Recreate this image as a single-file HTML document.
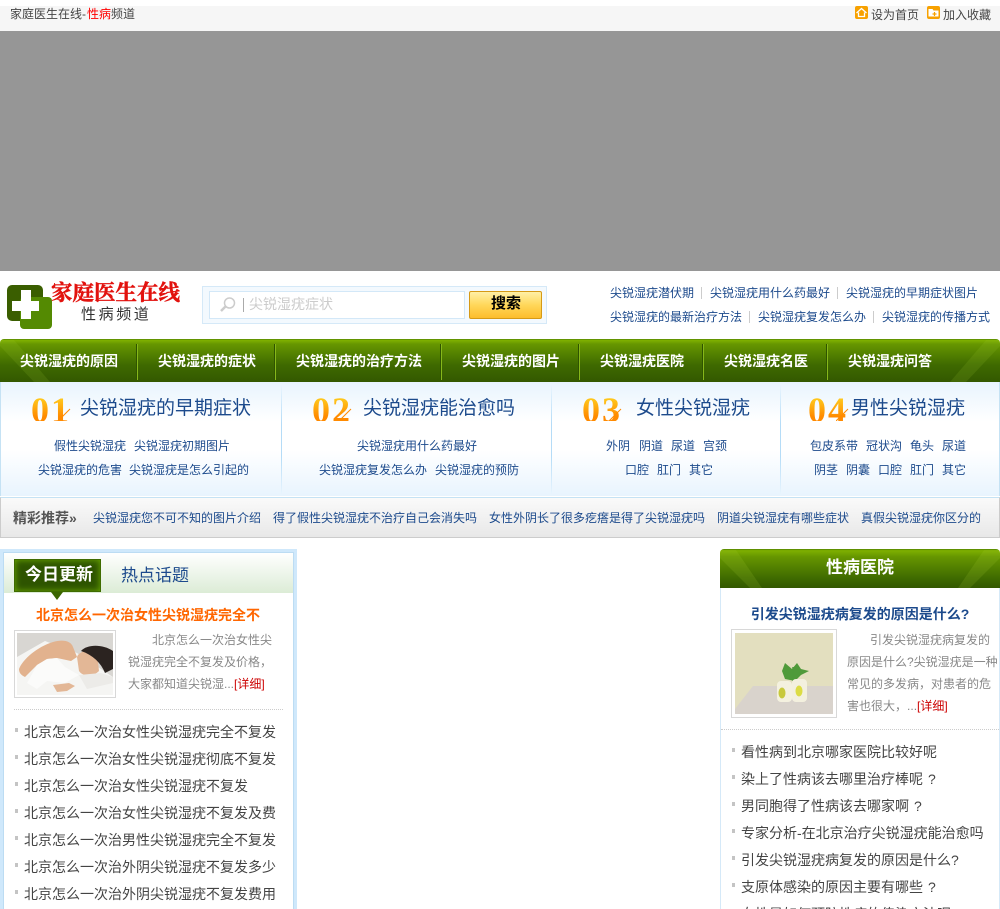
<!DOCTYPE html>
<html lang="zh-CN"><head><meta charset="utf-8"><title>家庭医生在线-性病频道</title>
<style>
html,body{margin:0;padding:0;background:#fff;width:1000px;height:909px;overflow:hidden}
body{position:relative;font:12px/20px "Liberation Sans","WenQuanYi Zen Hei","Noto Sans CJK SC",sans-serif;color:#444}
div,span,a,svg{position:absolute;display:block}
b,i{position:static;display:inline;font-style:normal}
#w{left:0;top:0;width:1000px;height:909px;overflow:hidden}
.t{white-space:nowrap;height:20px;line-height:20px}
.c{transform:translateX(-50%)}
.l{color:#1c4a8c}
.g{color:#888}
.n{color:#fff;font-weight:bold;font-size:14px}
.h{color:#1c4a8c;font-size:19px;line-height:24px;height:24px}
.m{font-size:14px;color:#444}
.sep{width:1px;background:linear-gradient(#e9f5fe,#b5dcf7 35%,#b5dcf7 65%,#e9f5fe)}
.ns{width:2px;top:344px;height:36px;background:linear-gradient(90deg,#2f5400 50%,#86b71a 50%)}
.bu{width:3px;height:4px;background:#c4c4c4}
.num{font:bold 36px/36px "Liberation Serif",serif;height:29px;overflow:hidden;background:linear-gradient(#ffd020 15%,#ff8a00 85%);-webkit-background-clip:text;background-clip:text;color:transparent;white-space:nowrap;letter-spacing:2px}
.ts{width:1px;height:12px;background:#ccc}
.p{font-family:"Noto Sans CJK TC",sans-serif;font-weight:normal}
.q{font-weight:normal;margin-left:5px}
</style></head><body><div id="w">
<div style="left:0;top:6px;width:1000px;height:25px;background:#f6f6f6"></div>
<div class="t" style="left:10px;top:4px">家庭医生在线-<b style="font-weight:normal;color:#f00;margin-left:1px">性病</b>频道</div>
<svg style="left:855px;top:6px" width="13" height="13" viewBox="0 0 13 13"><rect width="13" height="13" rx="2" fill="#f7a100"/><path d="M1.500 7 6.500 2.500 11.500 7M3.500 6.500V10.500H9.500V6.500" fill="none" stroke="#fff" stroke-width="1.300"/></svg>
<div class="t" style="left:871px;top:5px">设为首页</div>
<svg style="left:927px;top:6px" width="13" height="13" viewBox="0 0 13 13"><rect width="13" height="13" rx="2" fill="#f7a100"/><path d="M1.500 3H5.500L6.500 4.500H11.500V10.500H1.500Z" fill="#fff"/><path d="M7.500 6V10M5.500 8H9.500" stroke="#f7a100" stroke-width="1.200"/></svg>
<div class="t" style="left:943px;top:5px">加入收藏</div>
<div style="left:0;top:31px;width:1000px;height:240px;background:#969696"></div>

<svg style="left:7px;top:284px" width="46" height="46" viewBox="0 0 46 46"><rect x="0" y="1" width="36" height="36" rx="5" fill="#3a5e00"/><rect x="13" y="13" width="32" height="32" rx="4" fill="#548a02"/><path d="M14 6h10v11h8v10h-8v8H14v-8H5V17h9z" fill="#fff"/></svg>
<div class="t" style="left:51px;top:280px;height:26px;line-height:26px;font-family:'Liberation Serif','Noto Serif CJK SC',serif;font-weight:bold;font-size:21.500px;color:#e2120e;-webkit-text-stroke:.5px #e2120e">家庭医生在线</div>
<div class="t" style="left:81px;top:305px;font-size:15px;color:#333;letter-spacing:2.600px">性病频道</div>

<div style="left:202px;top:286px;width:343px;height:36px;border:1px solid #d5e9f8;background:#f3f9fe"></div>
<div style="left:209px;top:291px;width:254px;height:26px;border:1px solid #d3e8f8;background:#fff"></div>
<svg style="left:219px;top:296px" width="18" height="18" viewBox="0 0 18 18"><circle cx="10.500" cy="7" r="5" fill="none" stroke="#ccc" stroke-width="1.500"/><path d="M6.500 10.500 2 15" stroke="#ccc" stroke-width="2.500"/></svg>
<div style="left:243px;top:298px;width:1px;height:14px;background:#aaa"></div>
<div class="t" style="left:249px;top:294px;font-size:14px;color:#ccc">尖锐湿疣症状</div>
<div style="left:469px;top:291px;width:71px;height:26px;border:1px solid #d69a16;border-radius:2px;background:linear-gradient(#fff0a6,#ffd75a 50%,#fdbd2c)"></div>
<div class="t c" style="left:506px;top:294px;font-size:15px;font-weight:bold;color:#000">搜索</div>

<div class="t l" style="left:610px;top:283px">尖锐湿疣潜伏期</div><div class="ts" style="left:701px;top:287px"></div>
<div class="t l" style="left:710px;top:283px">尖锐湿疣用什么药最好</div><div class="ts" style="left:837px;top:287px"></div>
<div class="t l" style="left:846px;top:283px">尖锐湿疣的早期症状图片</div>
<div class="t l" style="left:610px;top:307px">尖锐湿疣的最新治疗方法</div><div class="ts" style="left:749px;top:311px"></div>
<div class="t l" style="left:758px;top:307px">尖锐湿疣复发怎么办</div><div class="ts" style="left:873px;top:311px"></div>
<div class="t l" style="left:882px;top:307px">尖锐湿疣的传播方式</div>

<div style="left:0;top:339px;width:1000px;height:43px;border-radius:4px 4px 0 0;background:linear-gradient(#4f8000 0,#7fb000 3%,#669600 12%,#3f6a00 60%,#335800 100%)"></div>
<svg style="left:0;top:340px" width="1000" height="42"><path d="M0 6 34 42H50L14 0H0ZM1000 6 966 42H950L986 0H1000Z" fill="#a6d030" opacity=".14"/></svg>
<div class="t n" style="left:20px;top:351px">尖锐湿疣的原因</div><div class="ns" style="left:136px"></div>
<div class="t n" style="left:158px;top:351px">尖锐湿疣的症状</div><div class="ns" style="left:274px"></div>
<div class="t n" style="left:296px;top:351px">尖锐湿疣的治疗方法</div><div class="ns" style="left:440px"></div>
<div class="t n" style="left:462px;top:351px">尖锐湿疣的图片</div><div class="ns" style="left:578px"></div>
<div class="t n" style="left:600px;top:351px">尖锐湿疣医院</div><div class="ns" style="left:702px"></div>
<div class="t n" style="left:724px;top:351px">尖锐湿疣名医</div><div class="ns" style="left:826px"></div>
<div class="t n" style="left:848px;top:351px">尖锐湿疣问答</div>

<div style="left:0;top:382px;width:998px;height:114px;border:solid #c5e2f4;border-width:0 1px;background:linear-gradient(#e8f4fe,#fff 35%,#fff 60%,#e8f4fe)"></div>
<div class="sep" style="left:281px;top:385px;height:110px"></div>
<div class="sep" style="left:551px;top:385px;height:110px"></div>
<div class="sep" style="left:780px;top:385px;height:110px"></div>

<div class="num" style="left:31px;top:392px">01</div>
<svg style="left:58px;top:408px" width="13" height="13"><path d="M0 13 12 1" stroke="#ff8a00" fill="none"/></svg>
<div class="t h" style="left:80px;top:397px">尖锐湿疣的早期症状</div>
<div class="t l" style="left:54px;top:436px">假性尖锐湿疣</div><div class="t l" style="left:134px;top:436px">尖锐湿疣初期图片</div>
<div class="t l" style="left:38px;top:460px">尖锐湿疣的危害</div><div class="t l" style="left:129px;top:460px">尖锐湿疣是怎么引起的</div>

<div class="num" style="left:312px;top:392px">02</div>
<svg style="left:339px;top:408px" width="13" height="13"><path d="M0 13 12 1" stroke="#ff8a00" fill="none"/></svg>
<div class="t h" style="left:363px;top:397px">尖锐湿疣能治愈吗</div>
<div class="t l" style="left:357px;top:436px">尖锐湿疣用什么药最好</div>
<div class="t l" style="left:319px;top:460px">尖锐湿疣复发怎么办</div><div class="t l" style="left:435px;top:460px">尖锐湿疣的预防</div>

<div class="num" style="left:582px;top:392px">03</div>
<svg style="left:609px;top:408px" width="13" height="13"><path d="M0 13 12 1" stroke="#ff8a00" fill="none"/></svg>
<div class="t h" style="left:636px;top:397px">女性尖锐湿疣</div>
<div class="t l" style="left:606px;top:436px">外阴</div><div class="t l" style="left:639px;top:436px">阴道</div><div class="t l" style="left:671px;top:436px">尿道</div><div class="t l" style="left:703px;top:436px">宫颈</div>
<div class="t l" style="left:625px;top:460px">口腔</div><div class="t l" style="left:657px;top:460px">肛门</div><div class="t l" style="left:689px;top:460px">其它</div>

<div class="num" style="left:808px;top:392px">04</div>
<svg style="left:836px;top:408px" width="13" height="13"><path d="M0 13 12 1" stroke="#ff8a00" fill="none"/></svg>
<div class="t h" style="left:851px;top:397px">男性尖锐湿疣</div>
<div class="t l" style="left:810px;top:436px">包皮系带</div><div class="t l" style="left:866px;top:436px">冠状沟</div><div class="t l" style="left:910px;top:436px">龟头</div><div class="t l" style="left:942px;top:436px">尿道</div>
<div class="t l" style="left:814px;top:460px">阴茎</div><div class="t l" style="left:846px;top:460px">阴囊</div><div class="t l" style="left:878px;top:460px">口腔</div><div class="t l" style="left:910px;top:460px">肛门</div><div class="t l" style="left:942px;top:460px">其它</div>

<div style="left:0;top:497px;width:998px;height:39px;border:1px solid #ccc;border-top-color:#c5e2f4;background:linear-gradient(#fafafa,#e8e8e8)"></div>
<div class="t" style="left:13px;top:508px;font-size:14px;font-weight:bold;color:#555">精彩推荐»</div>
<div class="t l" style="left:93px;top:508px">尖锐湿疣您不可不知的图片介绍</div>
<div class="t l" style="left:273px;top:508px">得了假性尖锐湿疣不治疗自己会消失吗</div>
<div class="t l" style="left:489px;top:508px">女性外阴长了很多疙瘩是得了尖锐湿疣吗</div>
<div class="t l" style="left:717px;top:508px">阴道尖锐湿疣有哪些症状</div>
<div class="t l" style="left:861px;top:508px">真假尖锐湿疣你区分的</div>

<!-- left box -->
<div style="left:0;top:549px;width:297px;height:360px;background:#cfe8fb"></div>
<div style="left:3px;top:552px;width:289px;height:357px;border:solid #bcdcf3;border-width:1px 1px 0;background:#fff"></div>
<div style="left:4px;top:553px;width:289px;height:40px;background:linear-gradient(#fff,#dcecd6)"></div>
<div style="left:14px;top:559px;width:85px;height:31px;border:1px solid #3f6c00;background:#2e5400;box-shadow:inset 0 0 7px #6aa800"></div>
<div style="left:51px;top:592px;width:0;height:0;border:6px solid transparent;border-top:8px solid #3b6600;border-bottom:0"></div>
<div class="t" style="left:25px;top:565px;font-size:17px;font-weight:bold;color:#fff">今日更新</div>
<div class="t" style="left:121px;top:566px;font-size:17px;color:#1c4a8c;width:68px;letter-spacing:0">热点话题</div>
<div class="t c" style="left:148px;top:605px;font-size:14px;font-weight:bold;color:#f60">北京怎么一次治女性尖锐湿疣完全不</div>
<div style="left:14px;top:630px;width:100px;height:66px;border:1px solid #d8d8d8;background:#fff"></div>
<svg style="left:17px;top:633px" width="96" height="62" viewBox="0 0 96 62"><rect width="96" height="62" fill="#d8d6d2"/><path d="M0 62V24L28 8 60 20 96 44V62Z" fill="#f5f5f3"/><path d="M2 36C6 26 20 14 36 9 46 6 54 8 56 14L60 24 54 28 40 25 30 26 20 32 8 44C4 42 2 40 2 36Z" fill="#e2b28e"/><path d="M20 32 30 26 40 25 48 34 62 42 48 50 30 48 20 56 10 50Z" fill="#fbfbfa"/><path d="M60 24C62 18 72 16 80 20L82 38C76 44 66 44 62 38Z" fill="#e3b796"/><path d="M64 18C70 11 86 11 96 18V36L88 40C84 30 76 22 64 18Z" fill="#2b2320"/><path d="M36 52 52 50 58 53 50 58 40 59Z" fill="#e3b796"/><path d="M62 42 84 40 96 44V50L70 56Z" fill="#ecebe8"/></svg>
<div class="t g" style="left:152px;top:630px">北京怎么一次治女性尖</div>
<div class="t g" style="left:128px;top:652px">锐湿疣完全不复发及价格<b class="p">，</b></div>
<div class="t g" style="left:128px;top:674px">大家都知道尖锐湿...<b style="font-weight:normal;color:#c00">[详细]</b></div>
<div style="left:14px;top:709px;width:269px;border-top:1px dotted #ccc"></div>
<div class="bu" style="left:15px;top:728px"></div><div class="t m" style="left:24px;top:722px">北京怎么一次治女性尖锐湿疣完全不复发</div>
<div class="bu" style="left:15px;top:755px"></div><div class="t m" style="left:24px;top:749px">北京怎么一次治女性尖锐湿疣彻底不复发</div>
<div class="bu" style="left:15px;top:782px"></div><div class="t m" style="left:24px;top:776px">北京怎么一次治女性尖锐湿疣不复发</div>
<div class="bu" style="left:15px;top:809px"></div><div class="t m" style="left:24px;top:803px">北京怎么一次治女性尖锐湿疣不复发及费</div>
<div class="bu" style="left:15px;top:836px"></div><div class="t m" style="left:24px;top:830px">北京怎么一次治男性尖锐湿疣完全不复发</div>
<div class="bu" style="left:15px;top:863px"></div><div class="t m" style="left:24px;top:857px">北京怎么一次治外阴尖锐湿疣不复发多少</div>
<div class="bu" style="left:15px;top:890px"></div><div class="t m" style="left:24px;top:884px">北京怎么一次治外阴尖锐湿疣不复发费用</div>

<!-- right box -->
<div style="left:720px;top:588px;width:278px;height:321px;border:solid #d5e9f8;border-width:0 1px"></div>
<div style="left:720px;top:549px;width:280px;height:39px;border-radius:4px 4px 0 0;background:linear-gradient(#4f8000 0,#7fb000 4%,#669600 20%,#3f6a00 75%,#335800 100%)"></div>
<svg style="left:720px;top:550px" width="280" height="38"><path d="M0 8 30 38H42L16 0H0ZM280 8 250 38H238L264 0H280Z" fill="#a6d030" opacity=".16"/></svg>
<div class="t c" style="left:860px;top:558px;font-size:17px;font-weight:bold;color:#fff">性病医院</div>
<div class="t c" style="left:860px;top:604px;font-size:14px;font-weight:bold;color:#1c4a8c">引发尖锐湿疣病复发的原因是什么?</div>
<div style="left:731px;top:629px;width:104px;height:87px;border:1px solid #d8d8d8;background:#fff"></div>
<svg style="left:735px;top:633px" width="98" height="81" viewBox="0 0 98 81"><rect width="98" height="81" fill="#e3dfbf"/><path d="M0 81V76L18 53H98V81Z" fill="#d9d3cc"/><path d="M47 38 50 46 60 48 66 42 74 38 66 36 62 30 57 36 50 30Z" fill="#4f9a3a"/><path d="M58 48V34" stroke="#4f9a3a" stroke-width="1.500"/><rect x="42" y="48" width="15" height="21" rx="4" fill="#f4f1df"/><rect x="57" y="46" width="15" height="23" rx="4" fill="#f3f0de"/><ellipse cx="47" cy="60" rx="3.500" ry="5.500" fill="#c8c93c"/><ellipse cx="64" cy="58" rx="3.500" ry="5.500" fill="#dcdc44"/></svg>
<div class="t g" style="left:870px;top:630px">引发尖锐湿疣病复发的</div>
<div class="t g" style="left:847px;top:652px">原因是什么?尖锐湿疣是一种</div>
<div class="t g" style="left:847px;top:674px">常见的多发病<b class="p">，</b>对患者的危</div>
<div class="t g" style="left:847px;top:696px">害也很大<b class="p">，</b>...<b style="font-weight:normal;color:#c00">[详细]</b></div>
<div style="left:721px;top:729px;width:278px;border-top:1px dotted #ccc"></div>
<div class="bu" style="left:732px;top:748px"></div><div class="t m" style="left:741px;top:742px">看性病到北京哪家医院比较好呢</div>
<div class="bu" style="left:732px;top:775px"></div><div class="t m" style="left:741px;top:769px">染上了性病该去哪里治疗棒呢<b class="q">?</b></div>
<div class="bu" style="left:732px;top:802px"></div><div class="t m" style="left:741px;top:796px">男同胞得了性病该去哪家啊<b class="q">?</b></div>
<div class="bu" style="left:732px;top:829px"></div><div class="t m" style="left:741px;top:823px">专家分析-在北京治疗尖锐湿疣能治愈吗</div>
<div class="bu" style="left:732px;top:856px"></div><div class="t m" style="left:741px;top:850px">引发尖锐湿疣病复发的原因是什么?</div>
<div class="bu" style="left:732px;top:883px"></div><div class="t m" style="left:741px;top:877px">支原体感染的原因主要有哪些<b class="q">?</b></div>
<div class="t m" style="left:741px;top:904px">女性是如何预防性病的传染方法呢</div>
</div></body></html>
